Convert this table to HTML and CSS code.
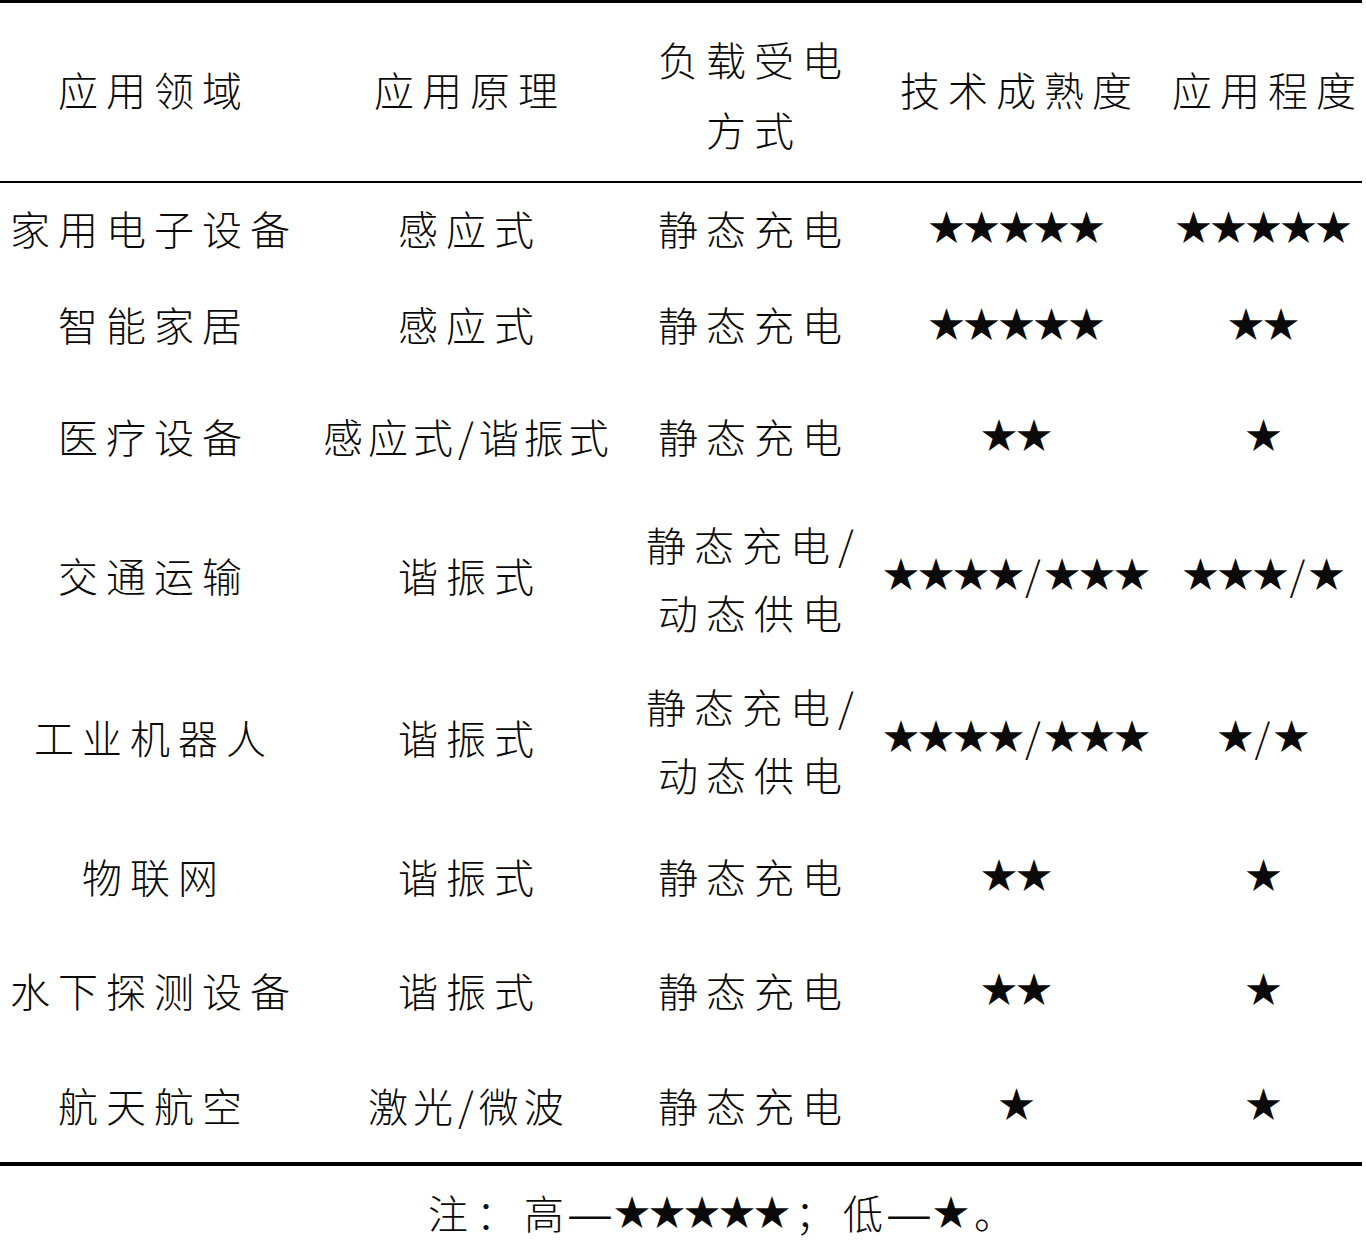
FILE: index.html
```html
<!DOCTYPE html>
<html lang="zh-CN">
<head>
<meta charset="utf-8">
<title>无线充电应用</title>
<link rel="stylesheet" href="styles.css">
</head>
<body>
<div class="page">
  <table class="tbl">
    <colgroup>
      <col class="c1"><col class="c2"><col class="c3"><col class="c4"><col class="c5">
    </colgroup>
    <thead>
      <tr class="hd">
        <th>应用领域</th>
        <th>应用原理</th>
        <th class="two">负载受电<br>方式</th>
        <th>技术成熟度</th>
        <th>应用程度</th>
      </tr>
    </thead>
    <tbody>
      <tr class="r1">
        <td>家用电子设备</td><td>感应式</td><td>静态充电</td>
        <td class="s"><span class="st">★★★★★</span></td><td class="s"><span class="st">★★★★★</span></td>
      </tr>
      <tr class="r2">
        <td>智能家居</td><td>感应式</td><td>静态充电</td>
        <td class="s"><span class="st">★★★★★</span></td><td class="s"><span class="st">★★</span></td>
      </tr>
      <tr class="r3">
        <td>医疗设备</td><td class="tight">感应式/谐振式</td><td>静态充电</td>
        <td class="s"><span class="st">★★</span></td><td class="s"><span class="st">★</span></td>
      </tr>
      <tr class="r4">
        <td>交通运输</td><td>谐振式</td><td class="two">静态充电/<br>动态供电</td>
        <td class="s"><span class="st">★★★★</span><span class="sl">/</span><span class="st">★★★</span></td>
        <td class="s"><span class="st">★★★</span><span class="sl">/</span><span class="st">★</span></td>
      </tr>
      <tr class="r5">
        <td>工业机器人</td><td>谐振式</td><td class="two">静态充电/<br>动态供电</td>
        <td class="s"><span class="st">★★★★</span><span class="sl">/</span><span class="st">★★★</span></td>
        <td class="s"><span class="st">★</span><span class="sl">/</span><span class="st">★</span></td>
      </tr>
      <tr class="r6">
        <td>物联网</td><td>谐振式</td><td>静态充电</td>
        <td class="s"><span class="st">★★</span></td><td class="s"><span class="st">★</span></td>
      </tr>
      <tr class="r7">
        <td>水下探测设备</td><td>谐振式</td><td>静态充电</td>
        <td class="s"><span class="st">★★</span></td><td class="s"><span class="st">★</span></td>
      </tr>
      <tr class="r8">
        <td>航天航空</td><td class="tight">激光/微波</td><td>静态充电</td>
        <td class="s"><span class="st">★</span></td><td class="s"><span class="st">★</span></td>
      </tr>
    </tbody>
  </table>
  <p class="note">注：高<span class="dash">—</span><span class="st">★★★★★</span>；低<span class="dash">—</span><span class="st">★</span>。</p>
</div>
</body>
</html>
```
FILE: styles.css
```css
html, body {
  margin: 0;
  padding: 0;
  background: #ffffff;
}
body {
  font-family: "Noto Sans CJK SC", "Noto Sans CJK JP", sans-serif;
  font-weight: 300;
  color: #0a0a0a;
}
.page {
  width: 1366px;
}
.tbl {
  width: 1362px;
  border-collapse: collapse;
  table-layout: fixed;
  border-top: 3px solid #000;
  border-bottom: 4px solid #000;
}
.c1 { width: 300px; }
.c2 { width: 332px; }
.c3 { width: 236px; }
.c4 { width: 296px; }
.c5 { width: 198px; }
th, td {
  box-sizing: border-box;
  font-size: 40px;
  font-weight: 300;
  letter-spacing: 8px;
  line-height: 48px;
  text-align: center;
  vertical-align: middle;
  padding: 0 0 6px 8px;
  white-space: nowrap;
}
td.s {
  padding-left: 0;
}
.hd th {
  height: 180px;
  border-bottom: 2px solid #000;
}
.hd th.two {
  line-height: 70px;
  padding-top: 10px;
}
td.two {
  line-height: 68px;
}
td.tight {
  letter-spacing: 5px;
  padding-left: 5px;
}
.r1 td { height: 97px; }
.r2 td { height: 97px; }
.r3 td { height: 126px; }
.r4 td { height: 152px; }
.r4 td.two { padding-bottom: 0; }
.r5 td { height: 172px; }
.r5 td.two { padding-bottom: 0; }
.r6 td { height: 106px; }
.r7 td { height: 122px; }
.r8 td { height: 110px; }
.st {
  font-size: 36px;
  letter-spacing: -1px;
  font-weight: 400;
  position: relative;
  top: -3px;
}
.sl {
  letter-spacing: 0;
  margin: 0 3px 0 2px;
}
.note {
  margin: 0;
  padding: 22px 0 0 428px;
  height: 51px;
  font-size: 40px;
  line-height: 48px;
  letter-spacing: 8px;
  white-space: nowrap;
}
.note .st {
  letter-spacing: -1px;
  margin-right: 6px;
}
.dash {
  display: inline-block;
  letter-spacing: 0;
  font-weight: 400;
  width: 44px;
  text-align: center;
  transform: scaleX(1.3);
  margin: 0 2px 0 -4px;
}
```
